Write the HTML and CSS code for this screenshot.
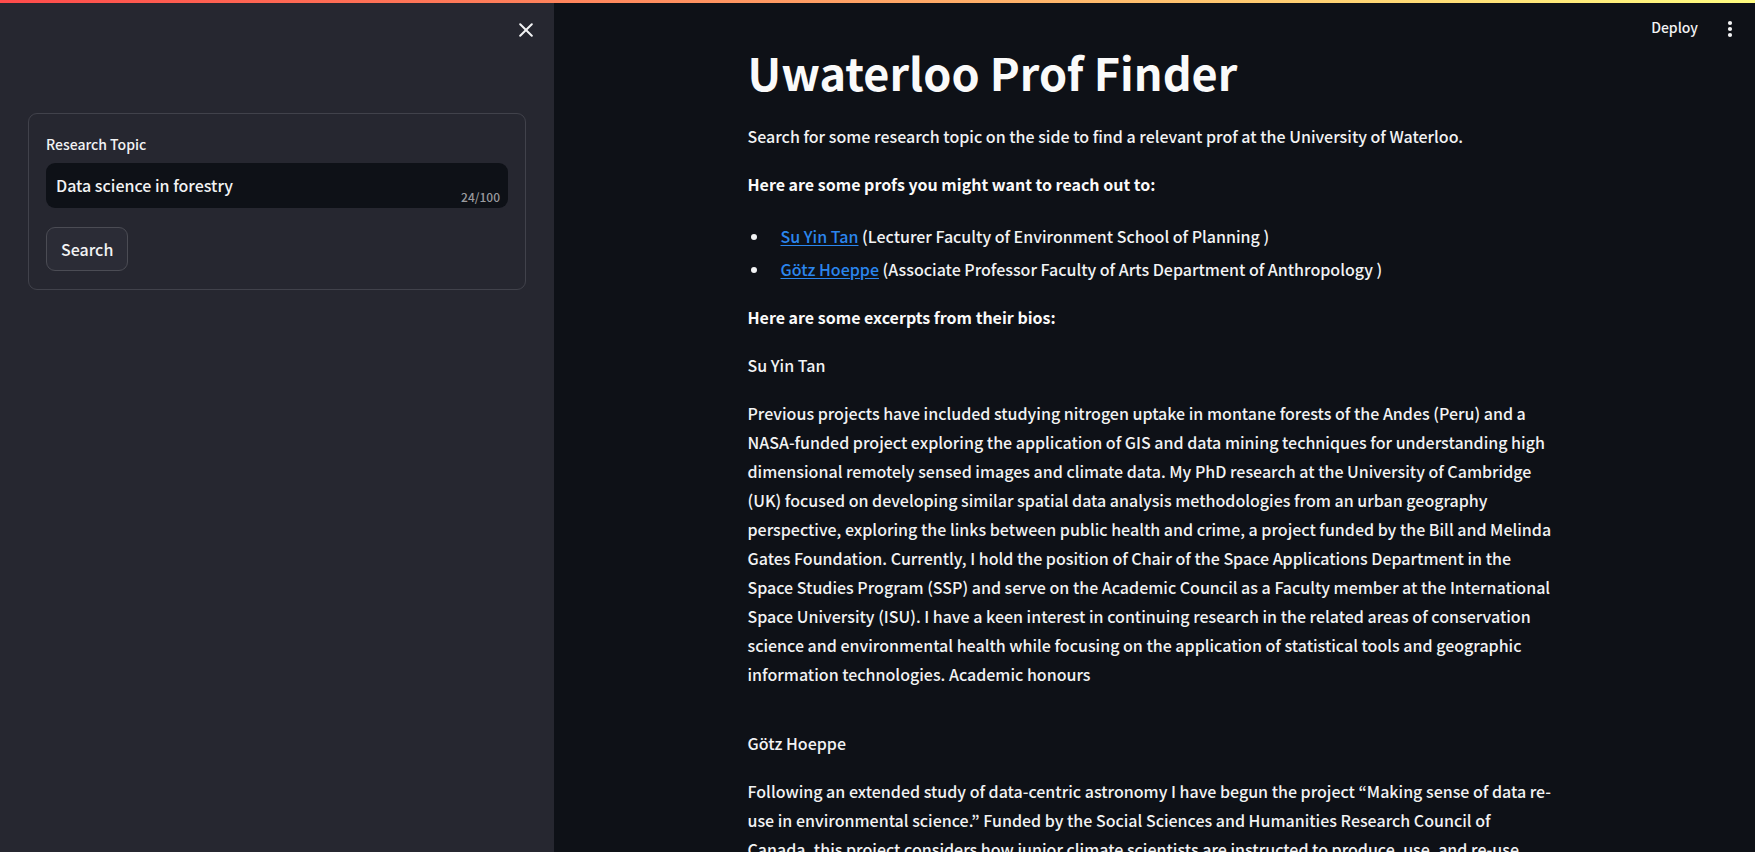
FILE: index.html
```html
<!DOCTYPE html>
<html lang="en">
<head>
<meta charset="utf-8">
<meta name="viewport" content="width=device-width, initial-scale=1">
<title>Uwaterloo Prof Finder</title>
<link rel="stylesheet" href="styles.css">
</head>
<body>
<div class="decoration"></div>
<div class="app">
  <aside class="sidebar">
    <div class="sidebar-header">
      <button class="icon-button" type="button" aria-label="Close sidebar">
        <svg width="14" height="14" viewBox="0 0 14 14" fill="none" stroke="currentColor" stroke-width="2" stroke-linecap="round" aria-hidden="true"><path d="M1.2 1.2 12.8 12.8M12.8 1.2 1.2 12.8"/></svg>
      </button>
    </div>
    <form class="search-form">
      <label class="field-label" for="topic">Research Topic</label>
      <div class="field">
        <input class="field-input" id="topic" type="text" maxlength="100" value="Data science in forestry">
        <span class="field-count">24/100</span>
      </div>
      <button class="search-button" type="button">Search</button>
    </form>
  </aside>
  <div class="view">
    <header class="toolbar">
      <button class="deploy-button" type="button">Deploy</button>
      <button class="icon-button" type="button" aria-label="Main menu">
        <svg width="6" height="18" viewBox="0 0 6 18" fill="currentColor" aria-hidden="true"><circle cx="3" cy="3" r="2.1"/><circle cx="3" cy="9" r="2.1"/><circle cx="3" cy="15" r="2.1"/></svg>
      </button>
    </header>
    <main class="content">
      <h1 class="title">Uwaterloo Prof Finder</h1>
      <p>Search for some research topic on the side to find a relevant prof at the University of Waterloo.</p>
      <p><strong>Here are some profs you might want to reach out to:</strong></p>
      <ul class="profs">
        <li><a href="#su-yin-tan">Su Yin Tan</a> (Lecturer Faculty of Environment School of Planning )</li>
        <li><a href="#gotz-hoeppe">Götz Hoeppe</a> (Associate Professor Faculty of Arts Department of Anthropology )</li>
      </ul>
      <p><strong>Here are some excerpts from their bios:</strong></p>
      <section class="bio" id="su-yin-tan">
        <p>Su Yin Tan</p>
        <p>Previous projects have included studying nitrogen uptake in montane forests of the Andes (Peru) and a NASA-funded project exploring the application of GIS and data mining techniques for understanding high dimensional remotely sensed images and climate data. My PhD research at the University of Cambridge (UK) focused on developing similar spatial data analysis methodologies from an urban geography perspective, exploring the links between public health and crime, a project funded by the Bill and Melinda Gates Foundation. Currently, I hold the position of Chair of the Space Applications Department in the Space Studies Program (SSP) and serve on the Academic Council as a Faculty member at the International Space University (ISU). I have a keen interest in continuing research in the related areas of conservation science and environmental health while focusing on the application of statistical tools and geographic information technologies. Academic honours</p>
      </section>
      <section class="bio" id="gotz-hoeppe">
        <p>Götz Hoeppe</p>
        <p>Following an extended study of data-centric astronomy I have begun the project “Making sense of data re-use in environmental science.” Funded by the Social Sciences and Humanities Research Council of Canada, this project considers how junior climate scientists are instructed to produce, use, and re-use</p>
      </section>
    </main>
  </div>
</div>
</body>
</html>
```

FILE: styles.css
```css
* {
  box-sizing: border-box;
}

body {
  margin: 0;
  height: 100vh;
  display: flex;
  flex-direction: column;
  overflow: hidden;
  background: #0e1117;
  color: #f2f3f4;
  font-family: "Noto Sans CJK KR", "Noto Sans", sans-serif;
  font-size: 16px;
  font-weight: 500;
  line-height: 29px;
}

button,
input {
  font: inherit;
  color: inherit;
}

button {
  cursor: pointer;
}

.decoration {
  flex: none;
  height: 3px;
  background: linear-gradient(90deg, #ff4b4b, #fffd80);
}

.app {
  flex: 1;
  min-height: 0;
  display: flex;
}

.sidebar {
  flex: none;
  width: 554px;
  padding: 0 28px;
  background: #262730;
}

.sidebar-header {
  display: flex;
  justify-content: flex-end;
  height: 110px;
  padding-top: 12px;
}

.icon-button {
  display: flex;
  align-items: center;
  justify-content: center;
  width: 30px;
  height: 30px;
  padding: 0;
  border: 0;
  background: none;
}

.sidebar-header .icon-button {
  margin-right: -15px;
}

.search-form {
  padding: 17px 17px 18px;
  border: 1px solid #41424b;
  border-radius: 9px;
}

.field-label {
  display: block;
  margin-bottom: 6px;
  font-size: 14px;
  line-height: 26px;
}

.field {
  position: relative;
  margin-bottom: 19px;
}

.field-input {
  display: block;
  width: 100%;
  height: 45px;
  padding: 0 10px 2px;
  border: 0;
  border-radius: 9px;
  outline: 0;
  background: #0e1117;
}

.field-count {
  position: absolute;
  right: 8px;
  bottom: 1px;
  font-size: 12px;
  line-height: 20px;
  color: #9a9b9f;
}

.search-button {
  height: 44px;
  padding: 0 14px;
  border: 1px solid #4b4c54;
  border-radius: 9px;
  background: #2b2c36;
}

.view {
  position: relative;
  flex: 1;
  min-width: 0;
  padding-right: 6px;
  overflow: hidden;
}

.toolbar {
  position: absolute;
  top: 10px;
  right: 10px;
  display: flex;
  align-items: center;
  gap: 17px;
}

.deploy-button {
  padding: 0 0 2px;
  border: 0;
  background: none;
  font-size: 14px;
}

.content {
  max-width: 808px;
  margin: 0 auto;
  padding-top: 38px;
}

.title {
  margin: 0 0 20px;
  color: #fafafa;
  font-size: 45px;
  line-height: 61px;
  font-weight: 700;
}

.content p {
  margin: 0 0 19px;
}

.content strong {
  color: #fafafa;
  font-weight: 700;
}

.profs {
  margin: 21px 0 17px;
  padding: 0;
}

.profs li {
  margin-left: 22px;
  padding: 2px 0 2px 11px;
}

.profs a {
  color: #2b86ee;
  text-underline-offset: 2px;
}

.bio {
  margin-bottom: 40px;
}
```
